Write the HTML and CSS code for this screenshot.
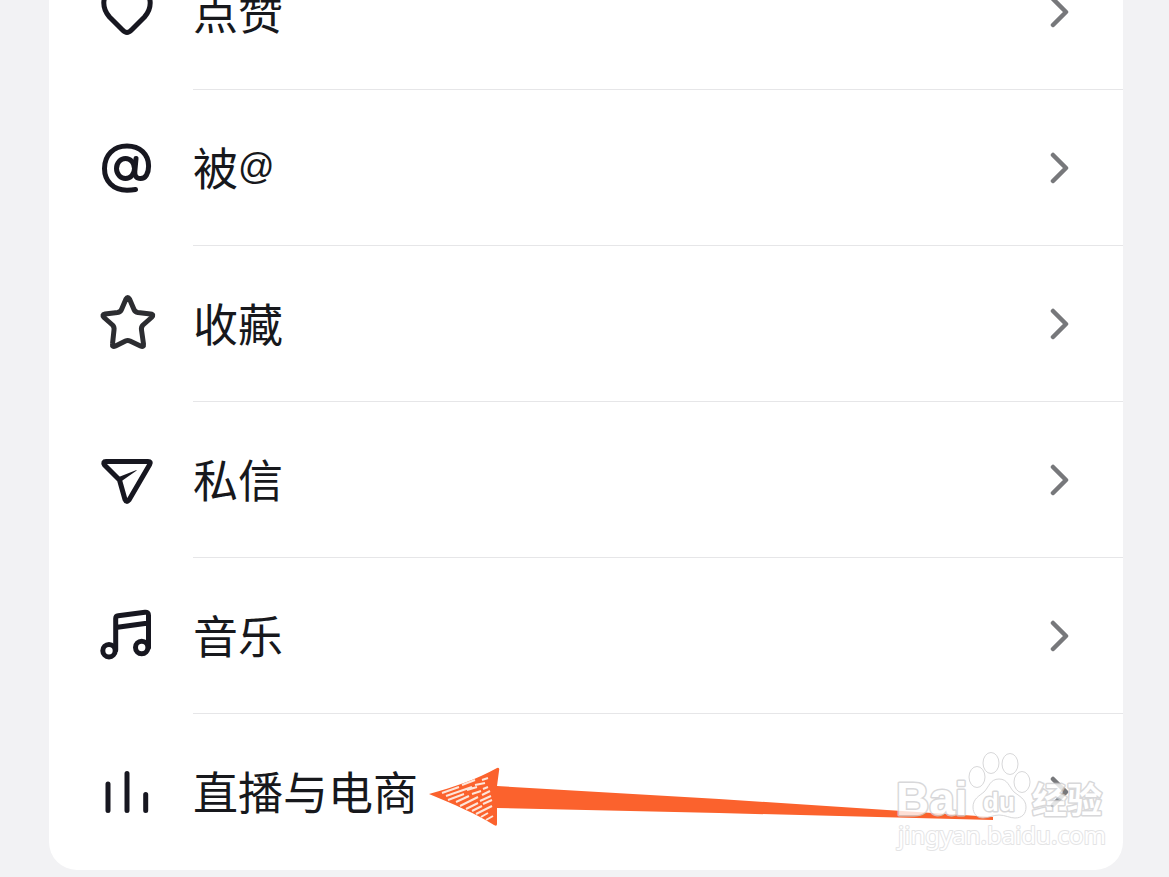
FILE: index.html
```html
<!DOCTYPE html>
<html lang="zh-CN">
<head>
    <meta charset="UTF-8">
    <meta name="viewport" content="width=device-width, initial-scale=1.0">
    <title>互动通知</title>
    <link rel="stylesheet" href="styles.css">
</head>
<body>
    <ul class="settings-card">
        <li>
            <a href="#like" class="row">
                <svg class="icon" viewBox="0 0 56 56"><path d="M28 48.500C26 48.500 24.500 47 23 45.500L10.500 33C7 29 4.800 25 4.800 19C4.800 11 11 5 18 5C22 5 26 7 28 11C30 7 34 5 38 5C45 5 51.200 11 51.200 19C51.200 25 49 29 45.500 33L33 45.500C31.500 47 30 48.500 28 48.500Z"/></svg>
                <span class="row-body">
                    <span class="label">点赞</span>
                    <svg class="chevron" viewBox="0 0 20 32"><path d="M3 3L16 16L3 29"/></svg>
                </span>
            </a>
        </li>
        <li>
            <a href="#mention" class="row">
                <svg class="icon" viewBox="0 0 56 56"><path d="M36.500 49.500C33.500 50 31 50.200 28 50.200C14 50.200 5.500 41 5.500 28.500C5.500 15 14.500 6 28 6C41 6 49.600 14.500 49.600 26C49.600 33.500 46.500 38.600 41.600 38.600C37.500 38.600 35.500 36 35.800 31.500L37 18.500"/><ellipse cx="26.500" cy="28.500" rx="9" ry="10"/></svg>
                <span class="row-body">
                    <span class="label">被<span class="at-sign">@</span></span>
                    <svg class="chevron" viewBox="0 0 20 32"><path d="M3 3L16 16L3 29"/></svg>
                </span>
            </a>
        </li>
        <li>
            <a href="#favorite" class="row">
                <svg class="icon star-icon" viewBox="0 0 56 56"><path d="M27 3Q28.700 0 30.500 3L35 13.500Q36 16 39 16.500L51.500 18Q55.500 18.500 52.500 21.500L44 29Q42 31 42.500 34L44.500 48Q45 51.500 41.500 50L31 45Q28.700 44 26.500 45L16.500 50Q13 51.500 13.500 48L15 34Q15.500 31 13.500 29L5 21.500Q2.500 18.500 6 18L18.500 16.500Q21.500 16 22.500 13.500Z"/></svg>
                <span class="row-body">
                    <span class="label">收藏</span>
                    <svg class="chevron" viewBox="0 0 20 32"><path d="M3 3L16 16L3 29"/></svg>
                </span>
            </a>
        </li>
        <li>
            <a href="#message" class="row">
                <svg class="icon" viewBox="0 0 56 56"><path d="M7 9.500H49Q52.500 9.500 50.700 12.500L30 48Q27.500 51 26 47.500L20.500 28L5.500 13Q3.500 9.500 7 9.500Z"/><path class="solid" d="M18.500 25.500L37.500 18Q38 18.500 37 19L22 29.500Z"/></svg>
                <span class="row-body">
                    <span class="label">私信</span>
                    <svg class="chevron" viewBox="0 0 20 32"><path d="M3 3L16 16L3 29"/></svg>
                </span>
            </a>
        </li>
        <li>
            <a href="#music" class="row">
                <svg class="icon" viewBox="0 0 56 56"><circle cx="10" cy="42.700" r="6.200"/><circle cx="42.700" cy="39.500" r="6.200"/><path d="M16.700 42V10.500Q16.700 8 19.200 7.700L46 4.300Q49.500 4 49.500 7.500V39.500M16.700 19.500L49.500 15"/></svg>
                <span class="row-body">
                    <span class="label">音乐</span>
                    <svg class="chevron" viewBox="0 0 20 32"><path d="M3 3L16 16L3 29"/></svg>
                </span>
            </a>
        </li>
        <li class="last">
            <a href="#live" class="row">
                <svg class="icon" viewBox="0 0 56 56"><path d="M9 20V46.500M28 9.500V46.500M46.700 30.500V46.500"/></svg>
                <span class="row-body">
                    <span class="label">直播与电商</span>
                    <svg class="chevron" viewBox="0 0 20 32"><path d="M3 3L16 16L3 29"/></svg>
                </span>
            </a>
            <svg class="arrow" viewBox="0 0 568 64">
                <path d="M0 28C26 21 48 13 68 2Q71 1 70 5L68 20L290 33L564 51V54L290 47L68 42V58Q68 61 65 59C48 48 24 38 0 28Z"/>
                <path class="hatch" d="M13 27L30 21M33 19L46 14M17 30L43 21M46 19L56 17M19 34L35 28M38 24L48 21M53 14L59 12M27 36L40 30M43 28L52 25M54 23L59 21M31 40L49 31M53 29L61 25M37 43L49 37M51 35L62 30M43 45L53 40M54 38L63 34M47 48L63 40M52 51L59 47M57 54L64 50"/>
            </svg>
            <svg class="watermark" viewBox="0 0 216 110">
                <text class="wm-bai" x="3" y="67">Bai</text>
                <ellipse cx="84" cy="29" rx="8" ry="10.500"/>
                <ellipse cx="98" cy="15" rx="8" ry="10.500"/>
                <ellipse cx="117" cy="16" rx="8" ry="10.500"/>
                <ellipse cx="129" cy="34" rx="8" ry="10.500"/>
                <path d="M106 31C97 31 96 39 91 44C86 48 80 51 80 59C80 66 84 70 90 70C96 70 100 67 106 67C112 67 117 70 122 70C129 70 133 66 133 59C133 51 126 48 121 44C116 39 115 31 106 31Z"/>
                <text class="wm-du" x="90" y="63">du</text>
                <text class="wm-cjk" x="139" y="65">经验</text>
                <text class="wm-url" x="5" y="96">jingyan.baidu.com</text>
            </svg>
        </li>
    </ul>
</body>
</html>
```
FILE: styles.css
```css
body {
    margin: 0;
    height: 100vh;
    overflow: hidden;
    background-color: #f2f2f4;
    color: #161823;
    font-family: "Noto Sans CJK SC", sans-serif;
}

/* the list is scrolled, so the first row is partly above the window */
.settings-card {
    margin: -66px 46px 0 49px;
    padding: 0;
    list-style: none;
    background-color: #fff;
    border-radius: 28px;
}

.row {
    display: flex;
    align-items: center;
    gap: 38px;
    height: 156px;
    padding-left: 50px;
    color: inherit;
    text-decoration: none;
}

.row-body {
    flex: 1;
    display: flex;
    align-items: center;
    justify-content: space-between;
    box-sizing: border-box;
    height: 156px;
    padding-right: 53px;
    border-bottom: 1px solid #e6e6e8;
}

.last {
    position: relative;
}

.last .row-body {
    border-bottom: none;
}

.label {
    display: flex;
    align-items: center;
    padding-bottom: 2px;
    font-size: 45px;
    line-height: 64px;
    color: #17181c;
}

.at-sign {
    font-family: "Liberation Sans", sans-serif;
    font-size: 36px;
}

.icon {
    width: 56px;
    height: 56px;
    overflow: visible;
    fill: none;
    stroke: #171720;
    stroke-width: 5;
    stroke-linecap: round;
    stroke-linejoin: round;
}

.icon .solid {
    fill: #171720;
    stroke: none;
}

.star-icon {
    stroke: #2c2d31;
}

.chevron {
    width: 20px;
    height: 32px;
    fill: none;
    stroke: #77787b;
    stroke-width: 4.500;
    stroke-linecap: round;
    stroke-linejoin: round;
}

.arrow {
    position: absolute;
    left: 380px;
    top: 52px;
    width: 568px;
    height: 64px;
    fill: #fb622d;
}

.arrow .hatch {
    fill: none;
    stroke: #fde5da;
    stroke-width: 2;
}

.watermark {
    position: absolute;
    right: 14px;
    bottom: 12px;
    width: 216px;
    height: 110px;
    fill: #fff;
    stroke: #cfcfd1;
    stroke-width: 1;
    opacity: 0.8;
}

.watermark text {
    stroke-width: 3;
    stroke-linejoin: round;
    paint-order: stroke;
}

.wm-bai,
.wm-du {
    font-family: "Liberation Sans", sans-serif;
    font-weight: bold;
    font-size: 46px;
}

.wm-du {
    font-size: 26px;
}

.wm-cjk {
    font-weight: bold;
    font-size: 35px;
}

.wm-url {
    font-family: "Noto Sans", sans-serif;
    font-size: 24px;
}

.watermark .wm-url {
    stroke: #dededf;
    stroke-width: 2;
}
```
